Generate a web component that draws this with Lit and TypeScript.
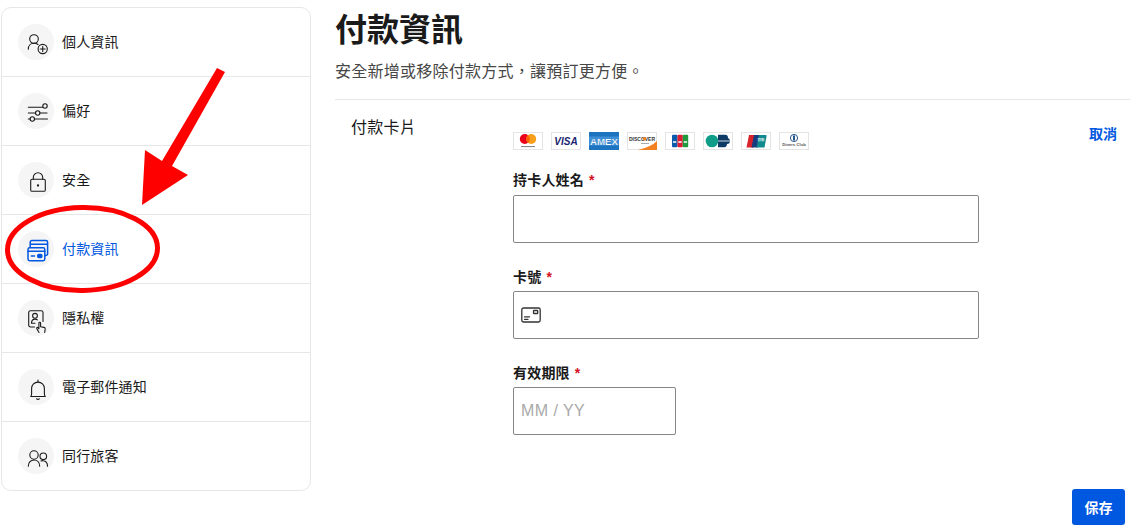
import { LitElement, html, css, svg } from "lit";
import { customElement } from "lit/decorators.js";

const ico = (c: unknown, w = 1.1) => html`<svg class="ic" viewBox="0 0 24 24" width="24" height="24" fill="none" stroke="currentColor" stroke-width="${w}" stroke-linecap="round" stroke-linejoin="round">${c}</svg>`;

const icons = {
  user: svg`<circle cx="10" cy="9" r="4.300"/><path d="M4.300 19.200c0-3.600 2.400-6 5.700-6 1.600 0 3 .5 4 1.300"/><circle cx="18.700" cy="19" r="4.600"/><path d="M18.700 16.500v5M16.200 19h5"/>`,
  sliders: svg`<path d="M4.300 8.200h14.400M4.300 14h7.200M16 14h7M4.300 20h2M10.500 20h13"/><circle cx="21" cy="7" r="2.200"/><circle cx="13.700" cy="14" r="2.200"/><circle cx="8.300" cy="20" r="2.200"/>`,
  lock: svg`<rect x="6.700" y="11.300" width="14.600" height="12" rx="1.400"/><path d="M9.300 11.300V9.400a4.700 4.700 0 0 1 9.400 0v1.900"/><circle cx="14" cy="17.500" r=".6" fill="currentColor"/>`,
  card: svg`<path d="M6.200 10.500V5.300a1.700 1.700 0 0 1 1.700-1.700h14a1.700 1.700 0 0 1 1.700 1.700v11.400a1.700 1.700 0 0 1-1.700 1.700h-1.300M6.200 7.200h17.400"/><rect x="4" y="10.800" width="16.800" height="13" rx="1.700" fill="#f5f5f5"/><path d="M4 14.300h16.800M7.300 19h3.200"/><rect x="13.800" y="17.400" width="4" height="3" rx="1" fill="currentColor"/>`,
  privacy: svg`<path d="M10.500 21H6.500a1.800 1.800 0 0 1-1.800-1.800V6.500a1.800 1.800 0 0 1 1.800-1.800h10.700a1.800 1.800 0 0 1 1.800 1.800v9"/><circle cx="11" cy="9.800" r="2.400"/><path d="M7.500 17.300c0-2.600 1.400-4.200 3.500-4.200 1 0 1.800.3 2.400.8M7.500 17.300h3.500"/><path d="M15 26.500l-2.200-3.800c-.5-1 .7-1.700 1.300-.9l.8 1v-5.800c0-1.100 1.700-1.100 1.700 0v3.800l3.400.6c.8.2 1.300.8 1.200 1.600l-.5 3.500"/>`,
  bell: svg`<path d="M6.700 21.500c0 0 .9-1 .9-2.500v-5.500a6.400 6.400 0 0 1 12.800 0V19c0 1.500.9 2.500.9 2.500z"/><path d="M14 7V5M12.700 23.800c.6.8 2 .8 2.600 0"/>`,
  people: svg`<circle cx="10" cy="11" r="4.200"/><circle cx="19.300" cy="12.300" r="3.300"/><path d="M4.300 22.300c0-3.800 2.500-6.300 5.700-6.300s5.700 2.500 5.700 6.300M17 17c.7-.3 1.500-.4 2.300-.3 2.500.2 4.200 2.400 4.200 5.600"/>`,
};

const navItems: [keyof typeof icons, string, boolean][] = [
  ["user", "個人資訊", false],
  ["sliders", "偏好", false],
  ["lock", "安全", false],
  ["card", "付款資訊", true],
  ["privacy", "隱私權", false],
  ["bell", "電子郵件通知", false],
  ["people", "同行旅客", false],
];

const logos = [
  svg`<circle cx="11.800" cy="7" r="5" fill="#eb001b"/><circle cx="18.200" cy="7" r="5" fill="#f79e1b"/><path d="M15 3.200a5 5 0 0 1 0 7.600 5 5 0 0 1 0-7.600z" fill="#ff5f00"/><rect x="8" y="14" width="14" height="1.100" fill="#888"/>`,
  svg`<text x="15" y="13" text-anchor="middle" font-family="Liberation Sans" font-size="10" font-weight="700" font-style="italic" fill="#1a1f71">VISA</text>`,
  svg`<rect width="30" height="18" fill="#1c74c0"/><rect y="4.500" width="30" height="9" fill="#3f8fd6"/><text x="15" y="12.700" text-anchor="middle" textLength="28" lengthAdjust="spacingAndGlyphs" font-family="Liberation Sans" font-size="9.500" font-weight="700" fill="#fff" stroke="#1c74c0" stroke-width=".2">AMEX</text>`,
  svg`<path d="M11 18Q24 15 30 9v9z" fill="#f48120"/><text x="15" y="8.500" text-anchor="middle" font-family="Liberation Sans" font-size="5" font-weight="700" fill="#333">DISCOVER</text><circle cx="17.500" cy="6.800" r="1.800" fill="#f48120"/><rect x="14" y="11" width="8" height="1" fill="#aaa"/>`,
  svg`<rect x="7" y="2.800" width="5.400" height="12.400" rx="1" fill="#0b5cad"/><rect x="12.400" y="2.800" width="5.400" height="12.400" rx="1" fill="#d81f35"/><rect x="17.800" y="2.800" width="5.400" height="12.400" rx="1" fill="#1f9a3c"/><path d="M8 10h3.300M13.400 10h3.300M18.800 10h3.300" stroke="#fff" stroke-width="1.400"/>`,
  svg`<circle cx="9" cy="9" r="6.300" fill="#0f9d8a"/><path d="M15 2.800h7a3.100 3.100 0 0 1 3 3.100 3.100 3.100 0 0 1 2 3.100 3.100 3.100 0 0 1-3 3.100 3.100 3.100 0 0 1-2 3.100h-7z" fill="#0d3b66"/><path d="M15 9h12" stroke="#fff" stroke-width=".8"/>`,
  svg`<path d="M8 3h7l-2.500 12.500H5.500z" fill="#d8232a"/><path d="M13 3h6.500L17 15.500h-6.500z" fill="#173c7f"/><path d="M18 3h6.500q1.500 0 1 1.500L23.500 15.500H15.500z" fill="#0f8a8f"/><text x="20" y="9" text-anchor="middle" font-family="Noto Sans CJK TC" font-size="3.500" fill="#fff">銀聯</text>`,
  svg`<circle cx="15" cy="6" r="3.600" fill="none" stroke="#27568b" stroke-width="1"/><rect x="14" y="3.500" width="2" height="5" fill="#27568b"/><text x="15" y="14" text-anchor="middle" font-family="Liberation Sans" font-size="4.200" font-weight="700" fill="#555">Diners Club</text>`,
];

@customElement("app-root")
export class AppRoot extends LitElement {
  static styles = css`
    :host {
      display: block;
      position: relative;
      width: 1130px;
      height: 529px;
      overflow: hidden;
      background: #fff;
      font-family: "Liberation Sans", "Noto Sans CJK TC", sans-serif;
      color: #1a1a1a;
    }
    .page { display: flex; align-items: flex-start; }
    .side {
      box-sizing: border-box;
      width: 310px;
      margin: 7px 24px 0 1px;
      border: 1px solid #e7e7e7;
      border-radius: 10px;
    }
    .nav {
      display: flex;
      align-items: center;
      gap: 8px;
      height: 68px;
      padding-left: 16px;
      border-bottom: 1px solid #e7e7e7;
      font-size: 14px;
    }
    .nav:last-child { border-bottom: 0; }
    .nav.on { color: #0057e0; }
    .t { padding-bottom: 3px; letter-spacing: .15px; }
    .circle {
      width: 36px; height: 36px;
      border-radius: 50%;
      background: #f5f5f5;
      display: flex; align-items: center; justify-content: center;
    }
    .ic { display: block; overflow: visible; }
    .main { flex: 1; min-width: 0; }
    h1 {
      margin: 10px 0 0;
      font-size: 32px;
      line-height: 40px;
      font-weight: 700;
    }
    .sub {
      margin: 10px 0 0;
      font-size: 16px;
      line-height: 24px;
      letter-spacing: .25px;
      color: #474747;
      padding-bottom: 15px;
      border-bottom: 1px solid #e7e7e7;
    }
    .row { display: flex; padding: 16px 13px 0 16px; }
    .rowlabel { width: 162px; font-size: 16px; line-height: 24px; letter-spacing: .3px; }
    .form { width: 466px; padding-top: 16px; }
    .logos { display: flex; gap: 8px; margin-bottom: 20px; }
    .logo {
      box-sizing: border-box;
      width: 30px; height: 18px;
      display: block;
      background: #fff;
      box-shadow: inset 0 0 0 1px #e4e4e4;
    }
    .field { display: flex; flex-direction: column; margin-bottom: 24px; }
    label {
      font-size: 14px;
      line-height: 20px;
      font-weight: 700;
      letter-spacing: .2px;
      margin-bottom: 5px;
    }
    .field + .field label { margin-bottom: 4px; }
    label b { color: #d4111e; margin-left: 5px; }
    .input {
      box-sizing: border-box;
      height: 48px;
      border: 1px solid #868686;
      border-radius: 2px;
      display: flex;
      align-items: center;
      gap: 8px;
      padding: 0 7px;
      font-size: 16px;
      letter-spacing: .45px;
      color: #a9a9a9;
    }
    .short { width: 163px; }
    .cancel {
      margin-left: auto;
      padding-top: 8px;
      font-size: 14px;
      line-height: 20px;
      font-weight: 700;
      color: #0057e0;
    }
    .foot { display: flex; justify-content: flex-end; padding: 30px 5px 0 0; }
    .save {
      width: 53px; height: 36px;
      background: #0057e0;
      color: #fff;
      border-radius: 3px;
      font-size: 14px;
      font-weight: 700;
      display: flex; align-items: center; justify-content: center;
    }
    .mark { position: absolute; left: 0; top: 0; pointer-events: none; }
  `;

  render() {
    return html`
      <div class="page">
        <nav class="side">
          ${navItems.map(([k, t, on]) => html`
            <div class="nav ${on ? "on" : ""}">
              <span class="circle">${ico(icons[k], on ? 1.5 : 1.1)}</span><span class="t">${t}</span>
            </div>`)}
        </nav>
        <main class="main">
          <h1>付款資訊</h1>
          <p class="sub">安全新增或移除付款方式，讓預訂更方便。</p>
          <section class="row">
            <div class="rowlabel">付款卡片</div>
            <div class="form">
              <div class="logos">
                ${logos.map((l) => html`<svg class="logo" viewBox="0 0 30 18">${l}</svg>`)}
              </div>
              <div class="field">
                <label>持卡人姓名<b>*</b></label>
                <div class="input"></div>
              </div>
              <div class="field">
                <label>卡號<b>*</b></label>
                <div class="input">
                  <svg width="20" height="16" viewBox="0 0 20 16" fill="none" stroke="#333" stroke-width="1.3" stroke-linecap="round">
                    <rect x=".8" y="1" width="18.4" height="14" rx="1.800"/>
                    <path d="M3.500 9.800h5M3.500 12.300h3.500"/>
                    <rect x="12.500" y="3.500" width="4.200" height="3" rx=".6"/>
                  </svg>
                </div>
              </div>
              <div class="field">
                <label>有效期限<b>*</b></label>
                <div class="input short">MM / YY</div>
              </div>
            </div>
            <div class="cancel">取消</div>
          </section>
          <div class="foot"><div class="save">保存</div></div>
        </main>
      </div>
      <svg class="mark" width="1130" height="529" viewBox="0 0 1130 529">
        <polygon fill="#fe0000" points="217,68 225,72 172,166 188,175 142,205 145,150 162,161"/>
        <ellipse cx="82.500" cy="249" rx="75" ry="41.500" transform="rotate(-1 82.500 249)" fill="none" stroke="#fe0000" stroke-width="5"/>
      </svg>
    `;
  }
}
